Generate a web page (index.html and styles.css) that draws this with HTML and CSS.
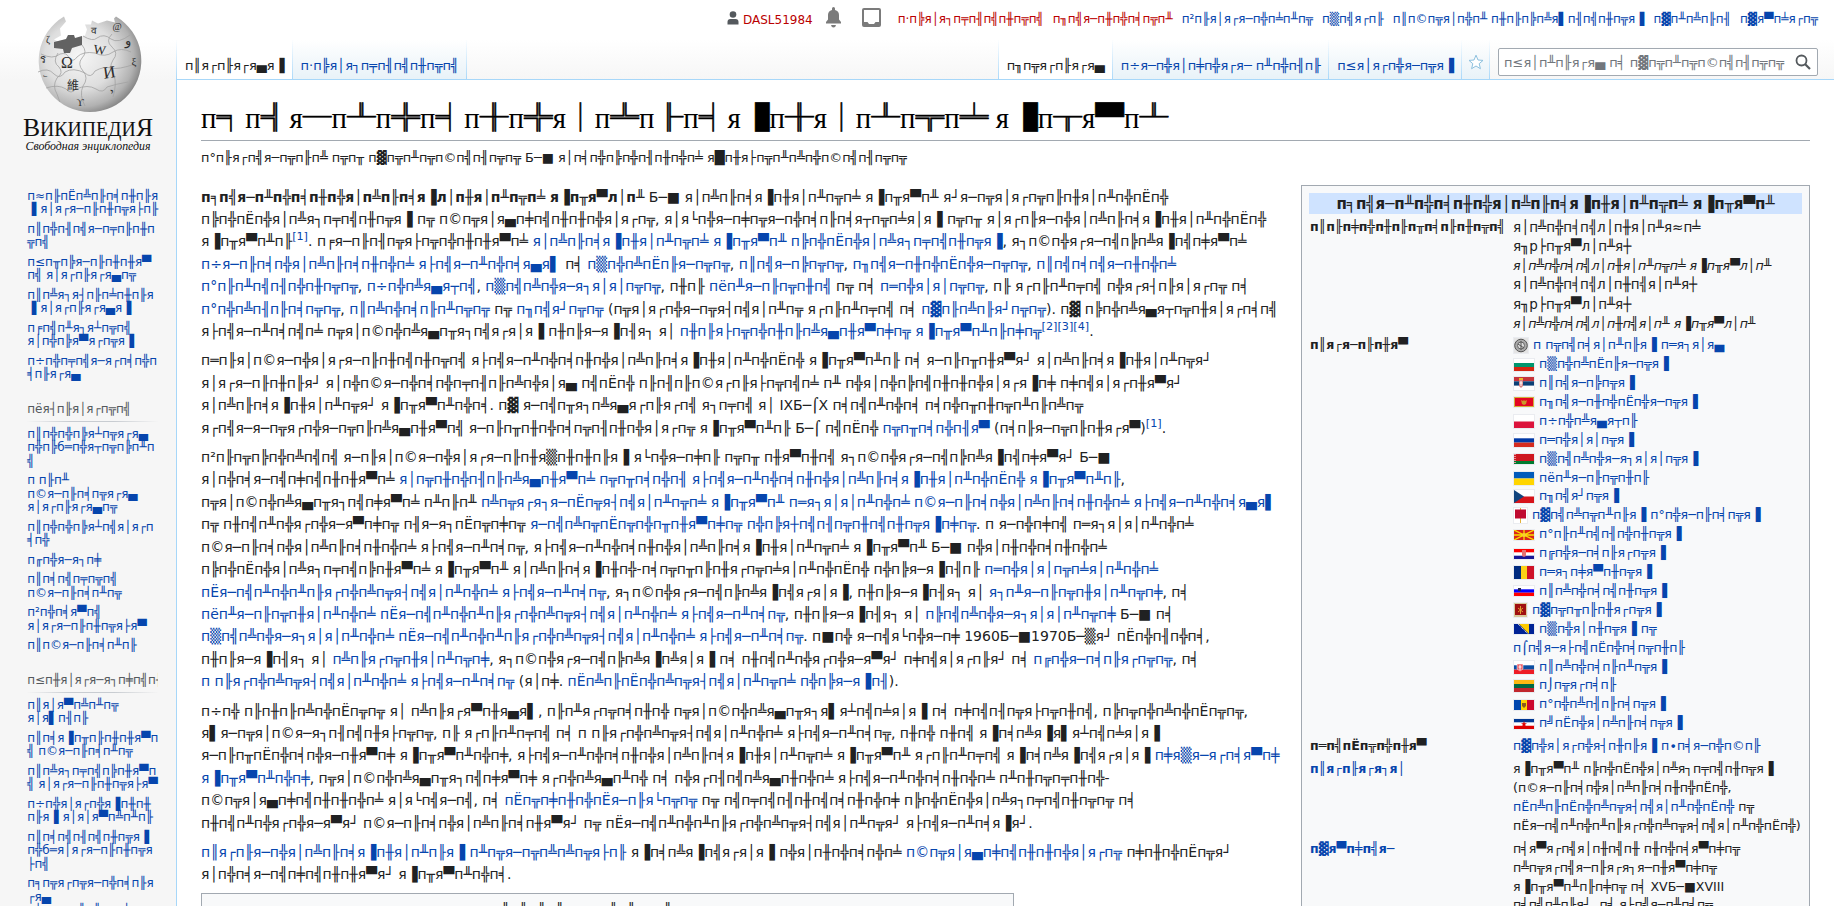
FILE: index.html
```html
<!DOCTYPE html>
<html>
<head>
<meta charset="koi8-r">
<title>Wiki</title>
<link rel="stylesheet" href="styles.css">
</head>
<body>
<div class="page">
<aside class="panel">
<a class="logo"><svg width="160" height="160" viewBox="0 0 160 160">
<defs>
<radialGradient id="ball" cx="0.4" cy="0.42" r="0.62"><stop offset="0" stop-color="#f6f6f6"/><stop offset="0.55" stop-color="#dedede"/><stop offset="0.85" stop-color="#b2b2b2"/><stop offset="1" stop-color="#858585"/></radialGradient>
</defs>
<path transform="translate(0 -2.500)" d="M56 19 A51.300 51.300 0 1 0 108 19 L106 21 L107 25 L99 23 L90 26 L84 23 L83 27 L77 27 L79 32 L77 38 L66 42 L50 44 L46 42 L53 38 L52 31 L58 24 Z" fill="url(#ball)"/>
<path d="M46 42 L58 39 L60 35 L66 35 L67 38 L74 36 L74 45 L64 48 L62 53 L56 53 L55 49 L46 48 Z" fill="#626262"/>
<g fill="none" stroke="#a2a2a2" stroke-width="0.8"><path d="M33 54 q12 6 19 0 q7-2 9 4 q4 5 8-1 q6-6 18-4 q10 5 18-1 q8-5 18 0 M30 72 q10-5 16 2 q6 6 11-2 q8-5 20 1 q6 6 10-2 q9-5 16-3 t24-4 M38 88 q12-4 20 1 q5 6 10 0 q12-5 20 0 q7 5 11-2 q9-3 21-5 M50 53 q-6 9 1 14 q5 6-2 11 q-5 8 0 16 q2 6 3 8 M74 45 q6 7 0 13 q-5 6 1 13 q6 7 0 15 q-4 9 2 20 M104 34 q-7 7 0 13 q7 6 1 13 q-5 8 1 15 q3 9-1 22 M75 36 q10 6 14 2 q7-5 14 1 q7 5 19-4"/></g>
<g font-family="Liberation Serif, serif" fill="#2d2d2d" text-anchor="middle"><text x="59" y="68" font-size="16">&#937;</text><text x="91" y="54" font-size="13" transform="rotate(8 91 54)">W</text><text x="102" y="78" font-size="17" transform="rotate(-8 102 78)">&#1048;</text><text x="65" y="90" font-size="12" font-family="Noto Sans CJK TC, sans-serif">&#32173;</text><text x="104" y="97" font-size="13">&#1497;</text><text x="120" y="45" font-size="13">&#1608;</text><text x="86" y="34" font-size="10">&#2357;</text><text x="35" y="63" font-size="11">&#3619;</text><text x="40" y="43" font-size="10">&#950;</text><text x="109" y="30" font-size="10">@</text><text x="37" y="82" font-size="9">&#1375;</text><text x="72" y="106" font-size="10">&#978;</text><text x="126" y="65" font-size="11">&#958;</text></g>
<g font-family="Liberation Serif, serif" fill="#111"><text x="15" y="136" font-size="26" textLength="130" lengthAdjust="spacingAndGlyphs">&#1042;<tspan font-size="20">&#1048;&#1050;&#1048;&#1055;&#1045;&#1044;&#1048;</tspan>&#1071;</text><text x="17.500" y="149.500" font-size="11.500" font-style="italic" textLength="125" lengthAdjust="spacingAndGlyphs">&#1057;&#1074;&#1086;&#1073;&#1086;&#1076;&#1085;&#1072;&#1103; &#1101;&#1085;&#1094;&#1080;&#1082;&#1083;&#1086;&#1087;&#1077;&#1076;&#1080;&#1103;</text></g>
</svg></a>
<nav class="portal first"><ul><li><a>Заглавная страница</a></li><li><a>Содержание</a></li><li><a>Избранные статьи</a></li><li><a>Случайная статья</a></li><li><a>Текущие события</a></li><li><a>Пожертвовать</a></li></ul></nav>
<nav class="portal"><h3>Участие</h3><ul><li><a>Сообщить об&#1073;&#9552;ошибке</a></li><li><a>Как править статьи</a></li><li><a>Сообщество</a></li><li><a>Форум</a></li><li><a>Свежие правки</a></li><li><a>Новые страницы</a></li><li><a>Справка</a></li></ul></nav>
<nav class="portal"><h3>Инструменты</h3><ul><li><a>Ссылки сюда</a></li><li><a>Связанные правки</a></li><li><a>Служебные страницы</a></li><li><a>Постоянная ссылка</a></li><li><a>Сведения о&#1073;&#9552;странице</a></li><li><a>Цитировать страницу</a></li></ul></nav>
</aside>
<div class="main">
<header class="head">
<div class="personal">
<a class="user red"><svg width="12" height="14" viewBox="0 0 12 14"><circle cx="6" cy="3.500" r="3.300" fill="#54595d"/><path d="M.5 13.500V11q0-3 3-3h5q3 0 3 3v2.500z" fill="#54595d"/></svg>DASL51984</a>
<svg class="bell" width="17" height="21" viewBox="0 0 17 21"><path d="M1 16.500v-1.500l2-2.500V8q0-4 4-5V1.500q0-1.500 1.500-1.500T10 1.500V3q4 1 4 5v4.500l2 2.500v1.500zM6 18h5q-.5 2.500-2.500 2.500T6 18z" fill="#7b7b7b"/></svg>
<svg class="tray" width="19" height="19" viewBox="0 0 19 19"><path fill-rule="evenodd" d="M2 0h15q2 0 2 2v15q0 2-2 2H2q-2 0-2-2V2Q0 0 2 0zm0 2v12h3.500l1.500 2h5l1.500-2H17V2z" fill="#7b7b7b"/></svg>
<a class="red">Обсуждение</a><a class="red">Черновик</a><a>Настройки</a><a>Бета</a><a>Список наблюдения</a><a>Вклад</a><a>Выйти</a>
</div>
<div class="tabs"><a class="tab sel">Статья</a><a class="tab">Обсуждение</a><span class="fill"></span><a class="tab sel">Читать</a><a class="tab">Просмотр кода</a><a class="tab">История</a><a class="tab star"><svg width="16" height="16" viewBox="0 0 16 16"><path d="M8 1.200l2 4.800 5 .4-3.800 3.300 1.200 5L8 12l-4.400 2.700 1.200-5L1 6.400 6 6z" fill="#fff" stroke="#8cc0de"/></svg></a>
<div class="search"><span>Искать в Википедии</span><svg width="16" height="16" viewBox="0 0 16 16"><circle cx="6.500" cy="6.500" r="5" fill="none" stroke="#54595d" stroke-width="1.800"/><path d="M10 10l5 5" stroke="#54595d" stroke-width="2.200"/></svg></div>
</div>
</header>
<main class="content">
<h1>&#1087;<i>&#9557;</i>&#1087;<i>&#9571;</i>&#1103;<i>&#9472;</i>&#1087;<i>&#9576;</i>&#1087;<i>&#9580;</i>&#1087;<i>&#9569;</i>&#1087;<i>&#9579;</i>&#1087;<i>&#9580;</i>&#1103;<i>&#9474;</i>&#1087;<i>&#9577;</i>&#1087;<i>&#9567;</i>&#1087;<i>&#9569;</i>&#1103;<i>&#9616;</i>&#1087;<i>&#9579;</i>&#1103;<i>&#9474;</i>&#1087;<i>&#9576;</i>&#1087;<i>&#9574;</i>&#1087;<i>&#9575;</i> &#1103;<i>&#9616;</i>&#1087;<i>&#9573;</i>&#1103;<i>&#9600;</i>&#1087;<i>&#9576;</i></h1>
<div class="sitesub">Материал из Википедии — свободной энциклопедии</div>
<div class="text">
<section class="infobox">
<div class="ibtitle">Церковнославянский язык</div>
<div class="row"><b>Самоназвание</b><div class="selfname"><span>слове́нскїй<br>ѧ҆зы́къ</span><br><i>слове́нский язы́к</i><br><span>слове́нескъ<br>ѧ҆зы́къ</span><br><i>слове́неск язы́к</i></div></div>
<div class="row"><b>Страны</b><div class="lands">
<a><svg class="flag" width="14" height="15"><rect width="14" height="15" fill="#e4e4e4"/><circle cx="7" cy="7.500" r="6.300" fill="#aaa" stroke="#555"/><circle cx="7" cy="7.500" r="3.500" fill="#ddd" stroke="#666"/><path d="M7 3v9M4 6l6 4" stroke="#555"/></svg> Киевская Русь</a>
<a><svg class="flag" width="20" height="12"><path fill="#fff" d="M0 0h20v4H0z"/><path fill="#00966e" d="M0 4h20v4H0z"/><path fill="#d62612" d="M0 8h20v4H0z"/></svg> Болгария</a>
<a><svg class="flag" width="20" height="13"><path fill="#fff" d="M0 0h20v13H0z"/><path fill="#c6363c" d="M0 0h20v4.300H0z"/><path fill="#0c4076" d="M0 4.300h20v4.300H0z"/><path fill="#edb92e" d="M5 1h4v2H5z"/><path fill="#d98080" d="M5 3h4v6l-2 2-2-2z"/><path d="M7 4v5M5.500 6h3" stroke="#fff"/></svg> Сербия</a>
<a><svg class="flag" width="20" height="10"><path fill="#d3ae3b" d="M0 0h20v10H0z"/><path fill="#e40521" d="M1 1h18v8H1z"/><path d="M7 3l2 1 1-1 1 1 2-1-1 4-2 1-2-1z" fill="#c99a28"/></svg> Черногория</a>
<a><svg class="flag" width="20" height="13"><path fill="#fff" d="M0 0h20v6.500H0z"/><path fill="#dc143c" d="M0 6.500h20V13H0z"/></svg> Польша</a>
<a><svg class="flag" width="20" height="13"><path fill="#fff" d="M0 0h20v4.300H0z"/><path fill="#0039a6" d="M0 4.300h20v4.300H0z"/><path fill="#d52b1e" d="M0 8.600h20V13H0z"/></svg> Россия</a>
<a><svg class="flag" width="20" height="10"><path fill="#ce1720" d="M0 0h20v7H0z"/><path fill="#007c30" d="M0 7h20v3H0z"/><path stroke="#e78b8f" stroke-width="2" stroke-dasharray="1 1" d="M1 0v10"/></svg> Белоруссия</a>
<a><svg class="flag" width="20" height="13"><path fill="#005bbb" d="M0 0h20v6.500H0z"/><path fill="#ffd500" d="M0 6.500h20V13H0z"/></svg> Украина</a>
<a><svg class="flag" width="20" height="13"><path fill="#fff" d="M0 0h20v6.500H0z"/><path fill="#d7141a" d="M0 6.500h20V13H0z"/><path fill="#11457e" d="M0 0l10 6.500L0 13z"/></svg> Чехия</a>
<a><svg class="flag" width="13" height="15"><path fill="#fff" d="M0 0h13v15H0z"/><path d="M6.500 0v15" stroke="#e3b23c"/><path fill="#bf0a30" d="M1 1.500h11v9H1z"/></svg> Великая Моравия</a>
<a><svg class="flag" width="20" height="10"><path fill="#d9251d" d="M0 0h20v10H0z"/><path d="M0 0l20 10M20 0L0 10M10 0v10M0 5h20" stroke="#f8e000" stroke-width="1.300"/><circle cx="10" cy="5" r="2" fill="#f8d030"/></svg> Македония</a>
<a><svg class="flag" width="20" height="10"><path fill="#fff" d="M0 0h20v10H0z"/><path fill="#f00" d="M0 0h20v3.300H0z"/><path fill="#171796" d="M0 6.700h20V10H0z"/><path fill="#e57373" d="M8 1h4v6l-2 1-2-1z"/></svg> Хорватия</a>
<a><svg class="flag" width="20" height="13"><path fill="#002b7f" d="M0 0h7v13H0z"/><path fill="#fcd116" d="M7 0h6v13H7z"/><path fill="#ce1126" d="M13 0h7v13h-7z"/></svg> Румыния</a>
<a><svg class="flag" width="20" height="10"><path fill="#fff" d="M0 0h20v10H0z"/><path fill="#00f" d="M0 3.300h20v3.400H0z"/><path fill="#f00" d="M0 6.700h20V10H0z"/><path fill="#225" d="M4 2h3v3H4z"/></svg> Словения</a>
<a><svg class="flag" width="13" height="14"><path fill="#d8c89a" d="M0 0h13v14H0z"/><path fill="#a01010" d="M1 1h11v11H1z"/><path d="M6.500 3v8M4 5l5 4M9 5L4 9" stroke="#e0a030"/></svg> Византия</a>
<a><svg class="flag" width="20" height="10"><path fill="#002395" d="M0 0h20v10H0z"/><path fill="#fecb00" d="M5 0h10v10z"/><path d="M4 0l10 10" stroke="#fff" stroke-dasharray="1 1"/></svg> Босния и Герцеговина</a>
<a><svg class="flag" width="20" height="13"><path fill="#fff" d="M0 0h20v4.300H0z"/><path fill="#0b4ea2" d="M0 4.300h20v4.300H0z"/><path fill="#ee1c25" d="M0 8.600h20V13H0z"/><path fill="#ee5c65" stroke="#fff" stroke-width=".5" d="M3 3h6v5L6 10 3 8z"/><path d="M6 4v5M4.500 6h3" stroke="#fff"/></svg> Словакия</a>
<a><svg class="flag" width="20" height="12"><path fill="#fdb913" d="M0 0h20v4H0z"/><path fill="#006a44" d="M0 4h20v4H0z"/><path fill="#c1272d" d="M0 8h20v4H0z"/></svg> Литва</a>
<a><svg class="flag" width="20" height="10"><path fill="#0046ae" d="M0 0h7v10H0z"/><path fill="#ffd200" d="M7 0h6v10H7z"/><path fill="#cc092f" d="M13 0h7v10h-7z"/><path fill="#8a5a20" d="M8 3h4v3l-2 2-2-2z"/></svg> Молдавия</a>
<a><svg class="flag" width="20" height="10"><path fill="#fff" d="M0 0h20v10H0z"/><path fill="#003893" d="M0 0h20v3.300H0z"/><path fill="#de0000" d="M0 6.700h20V10H0zM10 2l.8 2.200H13l-1.800 1.300.7 2.300L10 6.500 8.100 7.800l.7-2.300L7 4.200h2.200z"/></svg> Югославия</a>
</div></div>
<div class="row"><b>Регионы</b><div><a>Восточная Европа</a></div></div>
<div class="row"><b><a>Статус</a></b><div>язык богослужения (православного, <a>глаголического</a> и грекокатолического)</div></div>
<div class="row"><b><a>Вымер</a></b><div>вытеснен новыми литературными языками в XV—XVIII веках, в церкви</div></div>
</section>
<p><b>Церковнославя́нский язы́к</b> — славянский язык христианского богослужения и письменности, сформировавшийся из старославянского языка<sup><a>[1]</a></sup>. Традиционный <a>славянский язык богослужения</a>, употребляемый <a>Православной церковью</a> в <a>Болгарии</a>, <a>Сербии</a>, <a>Черногории</a>, <a>Северной Македонии</a>, <a>Польше</a>, <a>Белоруссии</a>, на <a>Украине</a> и в <a>России</a>, а также отчасти в <a>Молдавии</a>, <a>Словакии</a> и <a>Чехии</a> (исторически также в <a>Валахии</a>). В большинстве церквей используется наряду с <a>национальными языками</a><sup><a>[2]</a><a>[3]</a><a>[4]</a></sup>.</p>
<p>Распространение церковнославянского языка в разных славянских странах сопровождалось его адаптацией к особенностям местных славянских языков. В результате уже с IX–X веков возникали территориальные разновидности языка – его <a>изводы</a> (варианты)<sup><a>[1]</a></sup>.</p>
<p>Наиболее распространённая форма из ныне употребляемых — современный <a>синодальный извод церковнославянского языка</a>, используемый как <a>литургический язык</a> <a>Русской православной церковью</a> и некоторыми другими <a>религиозными объединениями</a>. Кроме Русской православной церкви, церковнославянский язык — основной богослужебный язык славяно-византийского обряда <a>Российской грекокатолической церкви</a>, употребляется, наряду с <a>украинским</a>, в <a>Украинской грекокатолической церкви</a>, наряду с <a>белорусским</a> — в <a>Белорусской грекокатолической церкви</a>. До реформ 1960—1970‑х годов, наряду с <a>латинским</a>, употреблялся в некоторых местах в <a>Хорватии</a>, в <a>Католической церкви</a> (см. <a>глаголический обряд</a>).</p>
<p>По аналогии с латынью, активно использующейся в медицине, биологии, юриспруденции, а также в Католической церкви, но не являющейся разговорным языком, церковнославянский язык также является <a>мёртвым языком</a>, используемым только в отдельной церковной книжно-письменной сфере, в <a>гимнографии</a> и ежедневном богослужении в некоторых православных и грекокатолических церквях.</p>
<p><a>Старославянская</a> <a>кириллица</a> является основой <a>письменности</a> многих современных языков.</p>
<div class="toc">Содержание</div>
</div>
</main>
</div>
</div>
</body>
</html>
```
FILE: styles.css
```css
html, body { margin: 0; height: 906px; overflow: hidden; }
body { background: #f6f6f6; font-family: "DejaVu Sans", sans-serif; font-size: 16px; color: #202122; }
a { color: #0645ad; text-decoration: none; }
.page { display: flex; height: 906px; overflow: hidden; background: linear-gradient(#fff 40px, #f6f6f6 80px); }
.panel { width: 168px; padding-right: 8px; flex: none; overflow: hidden; }
.logo { display: block; width: 160px; height: 160px; margin-left: 8px; }
.portal { margin: 0 9.600px 0 19.200px; padding: 4px 0 0; }
.portal.first { padding-top: 19.500px; margin-top: 7px; }
.portal h3 { margin: 9.500px 0 0 8px; padding: 4px 0 4.500px; font-size: 12px; font-weight: normal; line-height: 14px; color: #54595d; white-space: nowrap; overflow: hidden; border-bottom: 1px solid; border-image: linear-gradient(to right, rgba(200,204,209,0), #c8ccd1 33%, #c8ccd1 66%, rgba(200,204,209,0)) 1; }
.portal ul { list-style: none; margin: 0 0 0 8px; padding: 3px 0 0; }
.portal.first ul { padding-top: 0; }
.portal li { font-size: 12px; line-height: 13.500px; padding: 3px 0; overflow-wrap: break-word; }
.main { flex: 1; min-width: 0; display: flex; flex-direction: column; }
.head { height: 80px; flex: none; display: flex; flex-direction: column; }
.personal { height: 40px; box-sizing: border-box; padding: 11px 16px 0 0; display: flex; justify-content: flex-end; gap: 9px; font-size: 12px; line-height: 16px; white-space: nowrap; }
.personal .red { color: #ba0000; }
.user svg { margin-right: 4px; vertical-align: -1px; }
.bell { margin: -4px 3px 0 3px; }
.tray { margin: -3px 8px 0 8px; }
.tabs { height: 40px; display: flex; }
.tab { box-sizing: border-box; height: 40px; padding: 18px 7px 0 8px; font-size: 13px; line-height: 16px; white-space: nowrap; border-right: 1px solid; border-bottom: 1px solid #a7d7f9; border-image: linear-gradient(#fff, #a7d7f9) 1; background: linear-gradient(#fff, #e8f2f8); }
.tab.sel { color: #202122; background: #fff; border-left: 1px solid; border-bottom: 0; }
.fill { flex: 1; border-bottom: 1px solid #a7d7f9; }
.tab.star { padding: 14px 5px 0 6px; }
.search { box-sizing: border-box; width: 320px; height: 28px; margin: 8px 16px 0 8px; border: 1px solid #a2a9b1; border-radius: 2px; background: #fff; display: flex; justify-content: space-between; align-items: center; padding: 0 6px 0 5px; font-size: 13px; color: #72777d; white-space: nowrap; }
.content { flex: 1; border-left: 1px solid #a7d7f9; border-top: 1px solid #a7d7f9; margin-top: -1px; background: #fff; padding: 20px 24px 0; min-height: 0; }
h1 { margin: 0 0 7px; border-bottom: 1px solid #a2a9b1; font: normal 28.800px/36px "Liberation Serif", serif; color: #000; height: 40px; overflow: visible; white-space: nowrap; }
h1 i { font-style: normal; font-family: "Noto Sans CJK JP", sans-serif; line-height: 1; -webkit-text-stroke: 0.6px #000; }
.sitesub { font-size: 12.880px; line-height: 20.600px; }
.text { font-size: 14px; line-height: 22.400px; margin-top: 17px; }
p { margin: 7px 0; }
sup { font-size: 11.200px; line-height: 1; vertical-align: super; }
.infobox { float: right; box-sizing: border-box; width: 509px; height: 900px; margin: -1px 0 14px 14px; padding: 7px 7px 6px; border: 1px solid #a2a9b1; background: #f8f9fa; font-size: 12.600px; line-height: 18.900px; }
.ibtitle { background: #cfe3ff; text-align: center; font-weight: bold; font-size: 15.120px; line-height: 22px; height: 21px; margin-bottom: 2px; }
.row { display: grid; grid-template-columns: 203px 1fr; padding: 2px 0 2px 1px; }
.selfname { line-height: 18.600px; margin-bottom: -1px; }
.selfname span { font-size: 13.500px; line-height: 18px; }
.lands a { display: block; }
.flag { border: 1px solid #eaecf0; vertical-align: middle; box-sizing: content-box; }
.toc { width: 813px; height: 100px; margin-top: 7px; border: 1px solid #a2a9b1; background: #f8f9fa; text-align: center; font-weight: bold; padding: 5px 52px 0 0; box-sizing: border-box; }
```
